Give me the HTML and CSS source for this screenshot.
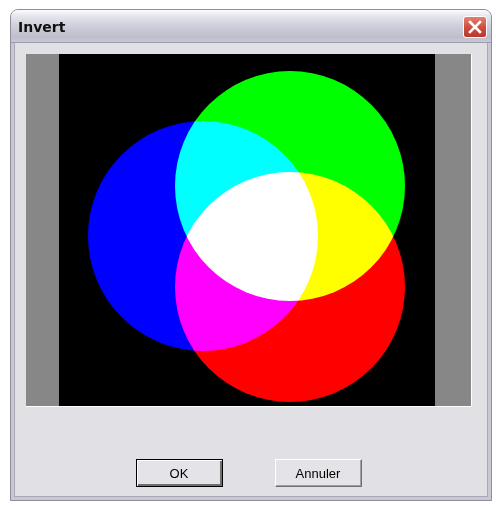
FILE: index.html
```html
<!DOCTYPE html>
<html lang="fr">
<head>
    <meta charset="UTF-8">
    <title>Invert</title>
    <link rel="stylesheet" href="styles.css">
</head>
<body>

<div class="window">
    <!-- Barre de titre -->
    <div class="titlebar">
        <span class="title">Invert</span>
        <span class="close">
            <svg width="14" height="14" viewBox="0 0 14 14">
                <path d="M2 2 L12 12 M12 2 L2 12" stroke="#fff" stroke-width="2.6" stroke-linecap="square"/>
            </svg>
        </span>
    </div>

    <div class="client">
        <!-- Aperçu de l'image -->
        <div class="preview">
            <div class="side"></div>
            <svg class="canvas" width="376" height="352" viewBox="0 0 376 352">
                <rect width="376" height="352" fill="#000"/>
                <circle class="light" cx="144" cy="182" r="115" fill="#0000ff"/>
                <circle class="light" cx="231" cy="132" r="115" fill="#00ff00"/>
                <circle class="light" cx="231" cy="233" r="115" fill="#ff0000"/>
            </svg>
            <div class="side right"></div>
        </div>

        <div class="buttons">
            <button class="default">OK</button>
            <button>Annuler</button>
        </div>
    </div>
</div>

</body>
</html>
```

FILE: styles.css
```css
body {
    margin: 0;
    background: #fff;
    font-family: "Liberation Sans", Arial, sans-serif;
}
.window {
    margin: 9px 0 0 10px;
    width: 482px;
    height: 492px;
    box-sizing: border-box;
    border: 1px solid #8e8d9c;
    border-radius: 8px 8px 0 0;
    background: #e1e0e5;
    display: flex;
    flex-direction: column;
}
.titlebar {
    height: 32px;
    display: flex;
    align-items: center;
    justify-content: space-between;
    padding: 0 4px 0 7px;
    border-radius: 7px 7px 0 0;
    background: linear-gradient(#fdfdfe 0%, #e6e6ee 18%, #cfcfdb 50%, #bdbdcc 85%, #c9c9d6 100%);
    border-bottom: 1px solid #9d9cac;
}
.title {
    font-family: Tahoma, "DejaVu Sans", sans-serif;
    font-weight: bold;
    font-size: 14px;
    color: #101010;
    padding-top: 2px;
}
.close {
    width: 24px;
    height: 22px;
    box-sizing: border-box;
    border: 1px solid #fff;
    border-radius: 3px;
    background: linear-gradient(#e4806f, #c9483a 60%, #b8392d);
    display: flex;
    align-items: center;
    justify-content: center;
    margin-top: 2px;
}
.client {
    flex: 1;
    border-left: 3px solid #c8c7d2;
    border-right: 3px solid #c8c7d2;
    border-bottom: 3px solid #c8c7d2;
    box-shadow: inset 1px 0 #a9a8b6, inset -1px 0 #a9a8b6, inset 0 -1px #a9a8b6;
    padding: 11px 17px 0 12px;
    display: flex;
    flex-direction: column;
}
.preview {
    display: flex;
    width: 445px;
    height: 352px;
    border-right: 1px solid #fff;
    border-bottom: 1px solid #fff;
}
.side {
    width: 33px;
    background: #878787;
}
.side.right {
    width: 36px;
}
.canvas {
    display: block;
}
.light {
    mix-blend-mode: screen;
}
.buttons {
    display: flex;
    justify-content: center;
    gap: 52px;
    margin-top: 52px;
}
button {
    width: 87px;
    height: 28px;
    font-family: "Liberation Sans", Arial, sans-serif;
    font-size: 13px;
    color: #000;
    background: #e4e3e8;
    border: 1px solid;
    border-color: #fff #6f6f6f #6f6f6f #fff;
    box-shadow: inset -1px -1px #a0a0a0;
    padding: 0;
}
button.default {
    border: 1px solid #000;
    box-shadow: inset 1px 1px #fff, inset -2px -2px #6f6f6f;
}
```
